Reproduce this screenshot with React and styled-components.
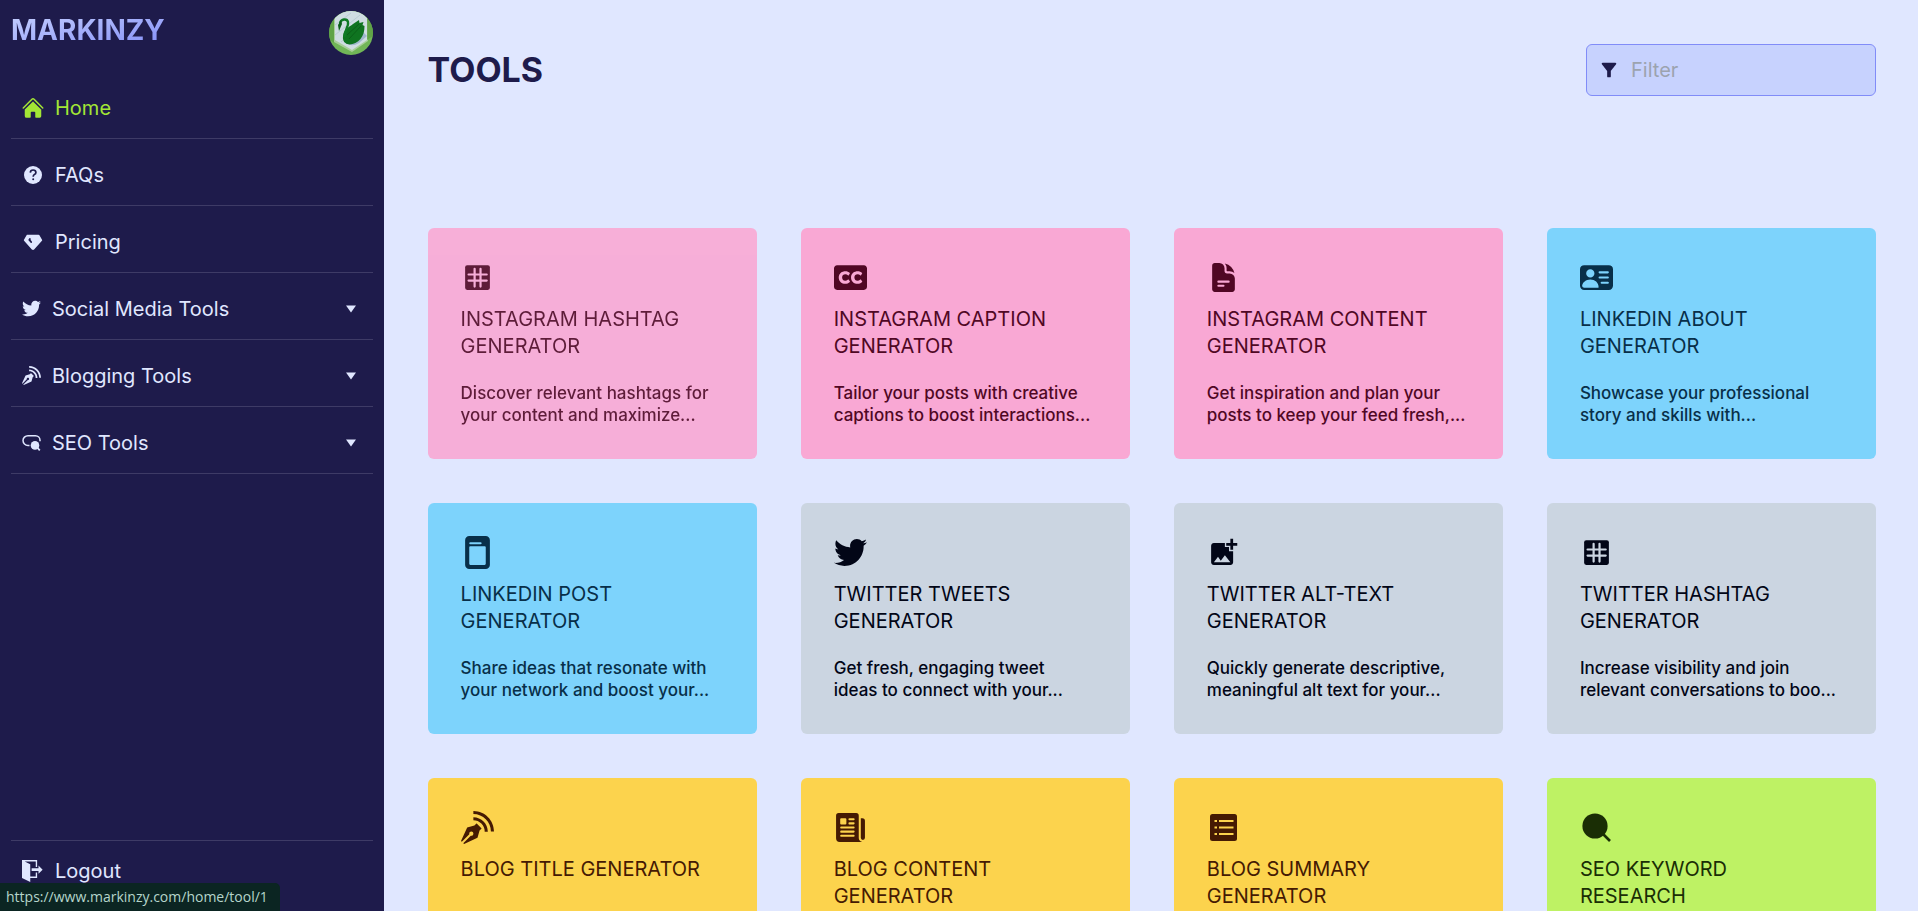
import React from "react";
import styled, { createGlobalStyle, css } from "styled-components";
import { HiHome, HiDocumentText } from "react-icons/hi2";
import { TbDiamondFilled } from "react-icons/tb";
import { FaTwitter, FaClosedCaptioning } from "react-icons/fa";
import { ImBlog, ImExit } from "react-icons/im";
import { BsPersonVcardFill, BsFilePostFill } from "react-icons/bs";
import { MdAddPhotoAlternate, MdFilterAlt } from "react-icons/md";
import { IoNewspaper } from "react-icons/io5";

const GlobalStyle = createGlobalStyle`
  *, *::before, *::after { box-sizing: border-box; }
  body { margin: 0; font-family: Inter, "Liberation Sans", sans-serif; background: #e0e7ff; }
  h1, h2, p, ul { margin: 0; padding: 0; }
  button, input { font: inherit; color: inherit; }
`;

const Layout = styled.div`
  display: flex;
  height: 100vh;
  overflow: hidden;
`;

const Sidebar = styled.aside`
  flex: 0 0 20%;
  display: flex;
  flex-direction: column;
  padding: 11px 11px 0;
  background: #1e1b4b;
  color: #e0e7ff;
`;

const Brand = styled.div`
  display: flex;
  justify-content: space-between;
  align-items: flex-start;
  height: 61px;
`;

const Logo = styled.a`
  font-size: 28px;
  line-height: 38px;
  font-weight: 700;
  text-decoration: none;
  color: transparent;
  background: linear-gradient(to bottom right, #c7d2fe, #818cf8);
  background-clip: text;
`;

const AvatarButton = styled.button`
  width: 44px;
  height: 44px;
  padding: 0;
  border: 0;
  border-radius: 50%;
  overflow: hidden;
  background: none;
  cursor: pointer;
  svg { display: block; }
`;

const NavList = styled.ul`
  list-style: none;
`;

const navRow = css`
  display: flex;
  align-items: center;
  gap: 11px;
  width: 100%;
  padding: 5px 11px 0;
  height: 66px;
  border: 0;
  background: none;
  font-size: 20px;
  text-align: left;
  text-decoration: none;
  color: ${(p) => (p.$active ? "#a3e635" : "inherit")};
  cursor: pointer;
`;

const NavItem = styled.li`
  border-bottom: 1px solid #3e3b66;
`;

const NavLink = styled.a`
  ${navRow}
`;

const NavGroup = styled.button`
  ${navRow}
`;

const IconSlot = styled.span`
  display: flex;
  justify-content: center;
  width: 22px;
  svg { flex: none; }
`;

const GroupLabel = styled.span`
  flex: 1;
`;

const CaretSvg = styled.svg`
  margin-right: 5px;
`;

const SidebarFooter = styled.div`
  margin-top: auto;
  border-top: 1px solid #3e3b66;
`;

const LogoutButton = styled.button`
  ${navRow}
  height: 70px;
  padding: 0 11px 10px;
`;

const Main = styled.main`
  flex: 1;
  min-width: 0;
  overflow-y: auto;
  scrollbar-width: none;
  padding: 44px 42px 44px 44px;
`;

const PageHeader = styled.header`
  display: flex;
  justify-content: space-between;
  align-items: center;
  margin-bottom: 132px;
`;

const PageTitle = styled.h1`
  font-size: 34px;
  line-height: 40px;
  font-weight: 700;
  color: #1e1b4b;
`;

const FilterBox = styled.label`
  display: flex;
  align-items: center;
  gap: 11px;
  width: 290px;
  height: 52px;
  padding: 0 11px;
  border: 1px solid #818cf8;
  border-radius: 6px;
  background: #c7d2fe;
  color: #1e1b4b;
  svg { flex: none; }
`;

const FilterInput = styled.input`
  flex: 1;
  min-width: 0;
  padding: 0;
  border: 0;
  outline: 0;
  background: none;
  font-size: 20px;
  &::placeholder { color: #9ca3af; opacity: 1; }
`;

const Grid = styled.div`
  display: grid;
  grid-template-columns: repeat(4, minmax(0, 1fr));
  gap: 44px;
`;

const tones = {
  pink: ["#f9a8d4", "#500724"],
  sky: ["#7dd3fc", "#082f49"],
  slate: ["#cbd5e1", "#020617"],
  amber: ["#fcd34d", "#451a03"],
  lime: ["#bef264", "#1a2e05"],
};

const Card = styled.a`
  display: flex;
  flex-direction: column;
  min-height: 231px;
  padding: 33px;
  border-radius: 6px;
  text-decoration: none;
  background: ${(p) => tones[p.$tone][0]};
  color: ${(p) => tones[p.$tone][1]};
  opacity: ${(p) => (p.$hovered ? 0.9 : 1)};
`;

const CardIcon = styled.span`
  --cut: ${(p) => tones[p.$tone][0]};
  display: flex;
  height: 33px;
`;

const CardTitle = styled.h2`
  margin-top: 12px;
  min-height: 54px;
  font-size: 20px;
  line-height: 27px;
  font-weight: 400;
  text-transform: uppercase;
  white-space: pre-line;
`;

const CardText = styled.p`
  margin-top: 22px;
  font-size: 17px;
  line-height: 22px;
  font-weight: 500;
  white-space: pre-line;
`;

const StatusBar = styled.div`
  position: fixed;
  left: 0;
  bottom: 0;
  padding: 0 12px 0 6px;
  border-top-right-radius: 5px;
  background: #0b2522;
  color: #b5d5cb;
  font-family: "Open Sans", "Noto Sans", sans-serif;
  font-size: 14px;
  line-height: 28px;
`;

const Caret = () => (
  <CaretSvg width="12" height="8" viewBox="0 0 12 8" fill="currentColor" aria-hidden="true">
    <path d="M1 .5h10L6 7.5z" />
  </CaretSvg>
);

const QuestionIcon = ({ size }) => (
  <svg width={size} height={size} viewBox="0 0 22 22" fill="none" aria-hidden="true">
    <circle cx="11" cy="11" r="9" fill="currentColor" />
    <path d="M8.300 8.600q.1-2.600 2.800-2.600t2.800 2.400q0 1.500-1.500 2.200-1.200.6-1.200 2.100" stroke="#1e1b4b" strokeWidth="1.700" />
    <circle cx="11.200" cy="15.300" r="1" fill="#1e1b4b" />
  </svg>
);

const HashIcon = ({ size }) => (
  <svg width={size} height={size} viewBox="0 0 24 24" aria-hidden="true">
    <rect x="3" y="3" width="18" height="18" rx="1.5" fill="currentColor" />
    <path d="M9.900 5.700v12.900M14.200 5.700v12.900M5.500 9.800h13.200M5.500 14.200h13.200" stroke="var(--cut)" strokeWidth="1.600" strokeLinecap="round" />
  </svg>
);

const ListIcon = ({ size }) => (
  <svg width={size} height={size} viewBox="0 0 33 33" aria-hidden="true">
    <rect x="3" y="3" width="27" height="27" rx="2.500" fill="currentColor" />
    <path d="M7.500 10h2.500M7.500 16.500h2.500M7.500 23h2.500M12 10h14.500M12 16.500h14.500M12 23h14.500" stroke="var(--cut)" strokeWidth="2" />
  </svg>
);

const MagnifierIcon = ({ size }) => (
  <svg width={size} height={size} viewBox="0 0 33 33" aria-hidden="true">
    <circle cx="15" cy="15" r="12.600" fill="currentColor" />
    <path d="M23 23l7 7" stroke="currentColor" strokeWidth="2.600" />
  </svg>
);

const SeoIcon = ({ size }) => (
  <svg width={size} height={size} viewBox="0 0 19 19" aria-hidden="true">
    <path d="M7.500 12.500H6a5 4.900 0 0 1 0-9.800h7.500a4.500 4.500 0 0 1 4.500 4.500v1" fill="none" stroke="currentColor" strokeWidth="1.500" />
    <circle cx="13" cy="12.400" r="4.300" fill="currentColor" />
    <path d="M15 14.400l2.800 2.900" stroke="currentColor" strokeWidth="1.800" />
  </svg>
);

const SwanAvatar = () => (
  <svg width="44" height="44" viewBox="0 0 44 44" aria-hidden="true">
    <rect width="44" height="44" fill="#71b657" />
    <path d="M5 0h34v30L23 41 5 31z" fill="#a9cf9b" />
    <path d="M6 7L14 0h17l7 7v22L23 39 6 29z" fill="#cfdde2" />
    <path d="M6 14l16-12M6 24L31 4M12 31L20 24" stroke="#b9cdd4" strokeWidth="1" fill="none" />
    <path d="M15 31q7 6 15 1l8-7-4-4-16 8z" fill="#9fb8cc" />
    <path d="M14 25c0-6 6-9 10-12l6-4 .5 3 4-1-1 3 2 1c0 5-1 9-4 13-4 5-12 7-15 4-2-1-3-4-2.500-7z" fill="#0f7420" />
    <path d="M11 12c1-4 7-5 8-1 1 5-4 8-3 15" fill="none" stroke="#0f7b25" strokeWidth="2.400" />
    <path d="M12 9l-3 5 1 6 3-7z" fill="#0b5f1a" />
    <path d="M18 24l12-11M20 28l12-13" stroke="#0b6119" strokeWidth="1" />
    <path d="M0 0h12L5 7v25L0 28zM44 0H32l6 7v22l6-4z" fill="#5da043" opacity=".8" />
  </svg>
);

const links = [
  { label: "Home", icon: <HiHome size={24} />, active: true },
  { label: "FAQs", icon: <QuestionIcon size={22} /> },
  { label: "Pricing", icon: <TbDiamondFilled size={22} /> },
];

const groups = [
  { label: "Social Media Tools", icon: <FaTwitter size={19} /> },
  { label: "Blogging Tools", icon: <ImBlog size={19} /> },
  { label: "SEO Tools", icon: <SeoIcon size={19} /> },
];

const tools = [
  { tone: "pink", Icon: HashIcon, title: "Instagram Hashtag\nGenerator", text: "Discover relevant hashtags for\nyour content and maximize...", hovered: true },
  { tone: "pink", Icon: FaClosedCaptioning, title: "Instagram Caption\nGenerator", text: "Tailor your posts with creative\ncaptions to boost interactions..." },
  { tone: "pink", Icon: HiDocumentText, title: "Instagram Content\nGenerator", text: "Get inspiration and plan your\nposts to keep your feed fresh,..." },
  { tone: "sky", Icon: BsPersonVcardFill, title: "LinkedIn About\nGenerator", text: "Showcase your professional\nstory and skills with..." },
  { tone: "sky", Icon: BsFilePostFill, title: "LinkedIn Post\nGenerator", text: "Share ideas that resonate with\nyour network and boost your..." },
  { tone: "slate", Icon: FaTwitter, title: "Twitter Tweets\nGenerator", text: "Get fresh, engaging tweet\nideas to connect with your..." },
  { tone: "slate", Icon: MdAddPhotoAlternate, title: "Twitter Alt-Text\nGenerator", text: "Quickly generate descriptive,\nmeaningful alt text for your..." },
  { tone: "slate", Icon: HashIcon, title: "Twitter Hashtag\nGenerator", text: "Increase visibility and join\nrelevant conversations to boo..." },
  { tone: "amber", Icon: ImBlog, title: "Blog Title Generator" },
  { tone: "amber", Icon: IoNewspaper, title: "Blog Content\nGenerator" },
  { tone: "amber", Icon: ListIcon, title: "Blog Summary\nGenerator" },
  { tone: "lime", Icon: MagnifierIcon, title: "SEO Keyword\nResearch" },
];

export default function App() {
  return (
    <>
      <GlobalStyle />
      <Layout>
        <Sidebar>
          <Brand>
            <Logo href="#home">MARKINZY</Logo>
            <AvatarButton type="button" aria-label="Profile">
              <SwanAvatar />
            </AvatarButton>
          </Brand>
          <nav>
            <NavList>
              {links.map((l) => (
                <NavItem key={l.label}>
                  <NavLink href="#" $active={l.active}>
                    <IconSlot>{l.icon}</IconSlot>
                    {l.label}
                  </NavLink>
                </NavItem>
              ))}
              {groups.map((g) => (
                <NavItem key={g.label}>
                  <NavGroup type="button">
                    {g.icon}
                    <GroupLabel>{g.label}</GroupLabel>
                    <Caret />
                  </NavGroup>
                </NavItem>
              ))}
            </NavList>
          </nav>
          <SidebarFooter>
            <LogoutButton type="button">
              <ImExit size={22} />
              Logout
            </LogoutButton>
          </SidebarFooter>
        </Sidebar>
        <Main>
          <PageHeader>
            <PageTitle>TOOLS</PageTitle>
            <FilterBox>
              <MdFilterAlt size={22} />
              <FilterInput type="text" placeholder="Filter" aria-label="Filter" />
            </FilterBox>
          </PageHeader>
          <Grid>
            {tools.map(({ tone, Icon, title, text, hovered }) => (
              <Card key={title} href="#" $tone={tone} $hovered={hovered}>
                <CardIcon $tone={tone}>
                  <Icon size={33} />
                </CardIcon>
                <CardTitle>{title}</CardTitle>
                {text && <CardText>{text}</CardText>}
              </Card>
            ))}
          </Grid>
        </Main>
      </Layout>
      <StatusBar>https://www.markinzy.com/home/tool/1</StatusBar>
    </>
  );
}
